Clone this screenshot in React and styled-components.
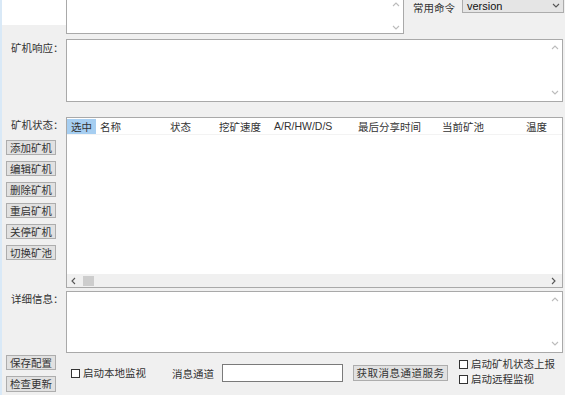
import React from 'react'
import styled, {createGlobalStyle} from 'styled-components'

const GlobalStyle = createGlobalStyle`
    html, body { margin: 0; padding: 0; background: #f0f0f0; }
    * { box-sizing: border-box; }
    body { font-family: "Noto Sans CJK SC", "Noto Sans", sans-serif; }
`

const Window = styled.div`
    width: 565px;
    height: 395px;
    overflow: hidden;
    background: #f0f0f0;
    border-left: 2px solid #d9e9f7;
    display: flex;
    flex-direction: column;
    font-size: 10.5px;
    color: #333;
`
const TopRow = styled.div`
    display: flex;
    align-items: flex-start;
    height: 34px;
`
const Corner = styled.div`
    width: 64px;
    height: 25px;
    background: #fff;
`
const Box = styled.div`
    display: flex;
    background: #fff;
    border: 1px solid #a9a9a9;
    width: ${p => p.$w}px;
    height: ${p => p.$h}px;
    ${p => p.$noTop && 'border-top: none;'}
`
const BoxBody = styled.div`
    flex: 1;
`
const VScroll = styled.div`
    width: 14px;
    display: flex;
    flex-direction: column;
    justify-content: space-between;
    align-items: center;
    padding: ${p => p.$pad}px 0;
`
const Command = styled.div`
    display: flex;
    align-items: flex-start;
    margin-left: 9px;
`
const CommandLabel = styled.span`
    line-height: 15px;
    font-size: 10.5px;
    margin-top: -1px;
    padding-top: 1px;
`
const Combo = styled.div`
    margin-left: 7px;
    width: 102px;
    height: 13px;
    background: #e5e5e5;
    border: 1px solid #acacac;
    border-top: none;
    display: flex;
    align-items: center;
    justify-content: space-between;
    padding: 0 3px 0 4px;
    font-family: "Liberation Sans", Arial, sans-serif;
    font-size: 11px;
    line-height: 12px;
    color: #111;
`
const Section = styled.div`
    display: flex;
    margin-top: ${p => p.$top}px;
`
const SideCol = styled.div`
    width: 64px;
    display: flex;
    flex-direction: column;
`
const Label = styled.div`
    padding-left: 9px;
    padding-top: ${p => p.$pt || 0}px;
    line-height: 14px;
    height: ${p => p.$h || 14}px;
`
const SideButtons = styled.div`
    display: flex;
    flex-direction: column;
    gap: 6px;
    padding-left: 4px;
    margin-top: ${p => p.$top || 0}px;
`
const Button = styled.div`
    width: ${p => p.$w || 50}px;
    height: ${p => p.$h || 15}px;
    margin-left: ${p => p.$ml || 0}px;
    background: #e1e1e1;
    border: 1px solid #adadad;
    display: flex;
    align-items: center;
    justify-content: center;
    line-height: 12px;
    letter-spacing: ${p => p.$ls || 0}px;
`
const ListView = styled.div`
    width: 497px;
    height: 171px;
    border: 1px solid #a9a9a9;
    background: #fff;
    display: flex;
    flex-direction: column;
`
const HeaderRow = styled.div`
    display: flex;
    height: 16px;
    margin-top: 1px;
    border-bottom: 1px solid #f3f3f3;
`
const HeaderCell = styled.div`
    width: ${p => p.$w}px;
    flex: ${p => (p.$w ? 'none' : 1)};
    padding-left: 4px;
    line-height: 15px;
    background: ${p => (p.$active ? '#a6cef1' : 'transparent')};
    font-family: ${p => (p.$latin ? '"Liberation Sans", Arial, sans-serif' : 'inherit')};
    font-size: ${p => (p.$latin ? '10.5px' : 'inherit')};
    white-space: nowrap;
`
const ListBody = styled.div`
    flex: 1;
`
const HScroll = styled.div`
    height: 13px;
    background: #f0f0f0;
    display: flex;
    align-items: center;
    padding: 0 4px 0 3px;
`
const Thumb = styled.div`
    width: 11px;
    height: 10px;
    background: #cdcdcd;
    margin-left: 5px;
`
const Spacer = styled.div`
    flex: 1;
`
const BottomRow = styled.div`
    display: flex;
    margin-top: 2px;
    height: 38px;
`
const BottomMain = styled.div`
    display: flex;
    align-items: center;
    height: 36px;
`
const Check = styled.label`
    display: flex;
    align-items: center;
    line-height: 12px;
    width: ${p => (p.$w ? p.$w + 'px' : 'auto')};
    margin-left: ${p => p.$ml || 0}px;
`
const CheckBox = styled.span`
    width: 9px;
    height: 9px;
    border: 1px solid #333;
    background: #fff;
    margin-right: 3px;
`
const FieldLabel = styled.span`
    width: 50px;
`
const Input = styled.div`
    width: 121px;
    height: 18px;
    border: 1px solid #7a7a7a;
    background: #fff;
`
const RightChecks = styled.div`
    display: flex;
    flex-direction: column;
    gap: 3px;
    margin-left: 11px;
    align-self: flex-start;
    margin-top: 3px;
`

const Chevron = ({dir = 'up', color = '#bcbcbc'}) => {
    const pts = {
        up: '1,5 4,2 7,5',
        down: '1,2 4,5 7,2',
        left: '5,1 2,4 5,7',
        right: '2,1 5,4 2,7',
    }[dir]
    return (
        <svg width="8" height="8" viewBox="0 0 8 8">
            <polyline points={pts} fill="none" stroke={color} strokeWidth="1.1" />
        </svg>
    )
}

const columns = [
    {name: '选中', w: 29, active: true},
    {name: '名称', w: 70},
    {name: '状态', w: 49},
    {name: '挖矿速度', w: 55},
    {name: 'A/R/HW/D/S', w: 84, latin: true},
    {name: '最后分享时间', w: 84},
    {name: '当前矿池', w: 84},
    {name: '温度'},
]

const minerButtons = ['添加矿机', '编辑矿机', '删除矿机', '重启矿机', '关停矿机', '切换矿池']

function App() {
    return (
        <>
            <GlobalStyle />
            <Window>
                <TopRow>
                    <Corner />
                    <Box $w={338} $h={34} $noTop>
                        <BoxBody />
                        <VScroll $pad={1}>
                            <Chevron dir="up" />
                            <Chevron dir="down" />
                        </VScroll>
                    </Box>
                    <Command>
                        <CommandLabel>常用命令</CommandLabel>
                        <Combo>
                            <span>version</span>
                            <Chevron dir="down" color="#555" />
                        </Combo>
                    </Command>
                </TopRow>

                <Section $top={5}>
                    <SideCol>
                        <Label $pt={2}>矿机响应：</Label>
                    </SideCol>
                    <Box $w={497} $h={63}>
                        <BoxBody />
                        <VScroll $pad={4}>
                            <Chevron dir="up" />
                            <Chevron dir="down" />
                        </VScroll>
                    </Box>
                </Section>

                <Section $top={15}>
                    <SideCol>
                        <Label $pt={1}>矿机状态：</Label>
                        <SideButtons $top={9}>
                            {minerButtons.map(b => (
                                <Button key={b}>{b}</Button>
                            ))}
                        </SideButtons>
                    </SideCol>
                    <ListView>
                        <HeaderRow>
                            {columns.map(c => (
                                <HeaderCell key={c.name} $w={c.w} $active={c.active} $latin={c.latin}>
                                    {c.name}
                                </HeaderCell>
                            ))}
                        </HeaderRow>
                        <ListBody />
                        <HScroll>
                            <Chevron dir="left" color="#555" />
                            <Thumb />
                            <Spacer />
                            <Chevron dir="right" color="#555" />
                        </HScroll>
                    </ListView>
                </Section>

                <Section $top={3}>
                    <SideCol>
                        <Label $pt={1}>详细信息：</Label>
                    </SideCol>
                    <Box $w={497} $h={62}>
                        <BoxBody />
                        <VScroll $pad={4}>
                            <Chevron dir="up" />
                            <Chevron dir="down" />
                        </VScroll>
                    </Box>
                </Section>

                <BottomRow>
                    <SideCol>
                        <SideButtons>
                            <Button $h={15}>保存配置</Button>
                            <Button $h={16}>检查更新</Button>
                        </SideButtons>
                    </SideCol>
                    <BottomMain>
                        <Check $w={101} $ml={5}>
                            <CheckBox />
                            启动本地监视
                        </Check>
                        <FieldLabel>消息通道</FieldLabel>
                        <Input />
                        <Button $w={95} $h={16} $ls={0.5} $ml={10}>获取消息通道服务</Button>
                        <RightChecks>
                            <Check>
                                <CheckBox />
                                启动矿机状态上报
                            </Check>
                            <Check>
                                <CheckBox />
                                启动远程监视
                            </Check>
                        </RightChecks>
                    </BottomMain>
                </BottomRow>
            </Window>
        </>
    )
}

export default App
